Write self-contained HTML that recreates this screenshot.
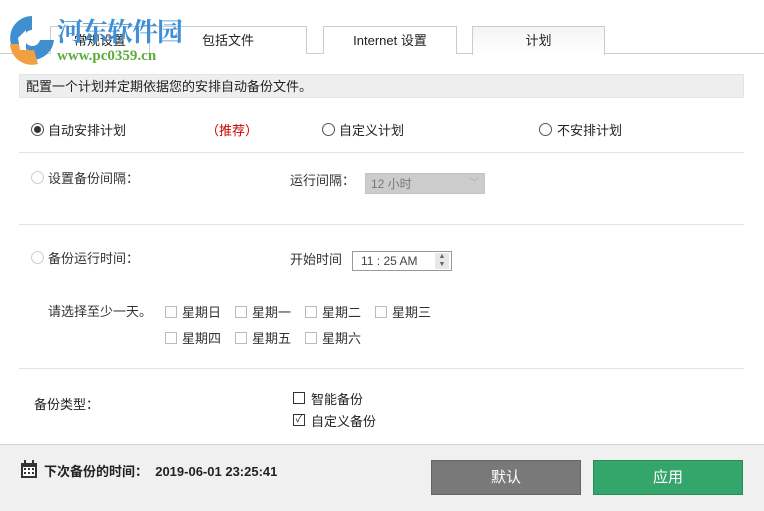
<!DOCTYPE html>
<html><head><meta charset="utf-8"><style>
body{margin:0;width:764px;height:510px;position:relative;background:#fff;font-family:"Liberation Sans","Noto Sans CJK SC",sans-serif;font-size:13px;color:#222;overflow:hidden}
.a{position:absolute;white-space:nowrap}
.tab{position:absolute;top:26px;height:27px;border:1px solid #ccc;border-bottom:none;background:#fff;text-align:center;line-height:28px;font-size:13px}
.hr{position:absolute;left:19px;width:725px;height:1px;background:#e3e3e3}
.rad{position:absolute;width:11px;height:11px;border:1px solid #555;border-radius:50%;background:#fff}
.rad.d{border-color:#ccc}
.cb{position:absolute;width:10px;height:10px;border:1px solid #bbb;background:#fff}
.g{color:#333}
</style></head><body>
<div class="a" style="left:0;top:53px;width:764px;height:1px;background:#ccc"></div>
<div class="tab" style="left:50px;width:98px">常规设置</div>
<div class="tab" style="left:149px;width:156px">包括文件</div>
<div class="tab" style="left:323px;width:132px">Internet 设置</div>
<div class="tab" style="left:472px;width:131px;height:28px;background:linear-gradient(#f4f4f4,#fff)">计划</div>
<svg class="a" style="left:4px;top:10px" width="56" height="56" viewBox="0 0 56 56">
<path d="M28 6 A22 22 0 1 0 50 30 L36 30 A8 8 0 1 1 28 20 Z" fill="#3f8fd0"/>
<path d="M6 34 A22 22 0 0 0 34 54 L30 40 A10 10 0 0 1 18 34 Z" fill="#f0a040"/>
<path d="M14 28 L22 20 L22 40 L16 40 Z" fill="#fff"/>
</svg>
<div class="a" style="left:57px;top:12px;font-family:'Noto Serif CJK SC',serif;font-weight:bold;font-size:26px;color:#3d8fd6;letter-spacing:-1px">河东软件园</div>
<div class="a" style="left:57px;top:48px;font-family:'Liberation Serif',serif;font-weight:bold;font-size:15px;color:#5aad3a">www.pc0359.cn</div>

<div class="a" style="left:19px;top:74px;width:725px;height:24px;background:#eee;border:1px solid #e4e4e4;box-sizing:border-box"></div>
<div class="a" style="left:26px;top:76px">配置一个计划并定期依据您的安排自动备份文件。</div>

<div class="rad" style="left:31px;top:123px"></div><div class="a" style="left:34px;top:126px;width:7px;height:7px;border-radius:50%;background:#333"></div>
<div class="a" style="left:48px;top:120px">自动安排计划</div>
<div class="a" style="left:206px;top:120px;color:#c00">（推荐）</div>
<div class="rad" style="left:322px;top:123px"></div><div class="a" style="left:339px;top:120px">自定义计划</div>
<div class="rad" style="left:539px;top:123px"></div><div class="a" style="left:557px;top:120px">不安排计划</div>
<div class="hr" style="top:152px"></div>

<div class="rad d" style="left:31px;top:171px"></div><div class="a g" style="left:48px;top:168px">设置备份间隔：</div>
<div class="a g" style="left:290px;top:170px">运行间隔：</div>
<div class="a" style="left:365px;top:173px;width:120px;height:21px;background:#ccc;border:1px solid #c4c4c4;box-sizing:border-box;color:#777;line-height:20px;padding-left:5px;font-size:12px">12 小时<span style="position:absolute;right:5px;color:#aaa;font-size:10px">﹀</span></div>
<div class="hr" style="top:224px"></div>

<div class="rad d" style="left:31px;top:251px"></div><div class="a g" style="left:48px;top:248px">备份运行时间：</div>
<div class="a g" style="left:290px;top:249px">开始时间</div>
<div class="a" style="left:352px;top:251px;width:100px;height:20px;border:1px solid #999;box-sizing:border-box;line-height:18px;padding-left:8px;color:#444;font-size:12px">11 : 25 AM<span style="position:absolute;right:2px;top:1px;width:14px;height:16px;background:#e8e8e8;font-size:7px;line-height:8px;text-align:center;color:#666">▲<br>▼</span></div>

<div class="a g" style="left:48px;top:301px">请选择至少一天。</div>
<div class="cb" style="left:165px;top:306px"></div><div class="a g" style="left:182px;top:302px">星期日</div>
<div class="cb" style="left:235px;top:306px"></div><div class="a g" style="left:252px;top:302px">星期一</div>
<div class="cb" style="left:305px;top:306px"></div><div class="a g" style="left:322px;top:302px">星期二</div>
<div class="cb" style="left:375px;top:306px"></div><div class="a g" style="left:392px;top:302px">星期三</div>
<div class="cb" style="left:165px;top:332px"></div><div class="a g" style="left:182px;top:328px">星期四</div>
<div class="cb" style="left:235px;top:332px"></div><div class="a g" style="left:252px;top:328px">星期五</div>
<div class="cb" style="left:305px;top:332px"></div><div class="a g" style="left:322px;top:328px">星期六</div>
<div class="hr" style="top:368px"></div>

<div class="a" style="left:34px;top:394px">备份类型：</div>
<div class="cb" style="left:293px;top:392px;border-color:#333"></div><div class="a" style="left:311px;top:389px">智能备份</div>
<div class="cb" style="left:293px;top:414px;border-color:#333;font-size:10px;line-height:10px;text-align:center">✓</div><div class="a" style="left:311px;top:411px">自定义备份</div>

<div class="a" style="left:0;top:444px;width:764px;height:66px;background:#f0f0f0;border-top:1px solid #d4d4d4"></div>
<svg class="a" style="left:20px;top:460px" width="18" height="19" viewBox="0 0 18 19"><rect x="1" y="3" width="16" height="15" fill="#333"/><rect x="3" y="7" width="12" height="9" fill="#fff"/><g fill="#333"><rect x="4" y="8" width="2" height="2"/><rect x="8" y="8" width="2" height="2"/><rect x="12" y="8" width="2" height="2"/><rect x="4" y="12" width="2" height="2"/><rect x="8" y="12" width="2" height="2"/><rect x="12" y="12" width="2" height="2"/></g><rect x="4" y="0" width="2" height="5" fill="#333"/><rect x="12" y="0" width="2" height="5" fill="#333"/></svg>
<div class="a" style="left:44px;top:461px;font-weight:bold;font-size:13px">下次备份的时间：&nbsp;&nbsp;2019-06-01 23:25:41</div>
<div class="a" style="left:431px;top:460px;width:150px;height:35px;background:#797979;border:1px solid #666;box-sizing:border-box;color:#fff;font-size:15px;text-align:center;line-height:33px">默认</div>
<div class="a" style="left:593px;top:460px;width:150px;height:35px;background:#34a56b;border:1px solid #2a8a58;box-sizing:border-box;color:#fff;font-size:15px;text-align:center;line-height:33px">应用</div>
</body></html>
